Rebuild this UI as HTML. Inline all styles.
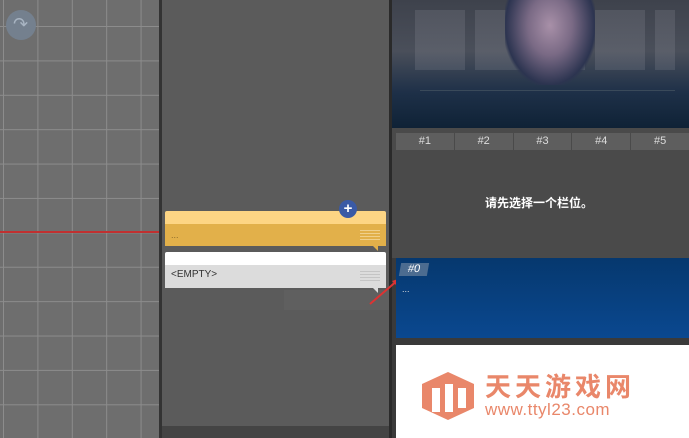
<!DOCTYPE html>
<html><head><meta charset="utf-8"><style>
body{margin:0;width:689px;height:438px;overflow:hidden;position:relative;background:#3a3a3a;font-family:"Liberation Sans","Noto Sans CJK SC",sans-serif}
.a{position:absolute}
</style></head><body>
<div class="a" style="left:0;top:0;width:159px;height:438px;background:#6e6e6e;
background-image:linear-gradient(#8c8c8c 1px,transparent 1px),linear-gradient(90deg,#8c8c8c 1px,transparent 1px);background-size:34.4px 34.4px;background-position:3px 26px"></div>
<div class="a" style="left:0;top:231px;width:160px;height:2px;background:#c03030"></div>
<div class="a" style="left:6px;top:10px;width:30px;height:30px;border-radius:50%;background:#74808e"></div>
<div class="a" style="left:13px;top:14px;color:#a8b4c2;font-size:18px">↷</div>
<div class="a" style="left:159px;top:0;width:3px;height:438px;background:#333"></div>
<div class="a" style="left:162px;top:0;width:227px;height:426px;background:#5b5b5b"></div>
<div class="a" style="left:162px;top:426px;width:227px;height:12px;background:#444"></div>
<div class="a" style="left:389px;top:0;width:3px;height:438px;background:#2a2a2a"></div>
<div class="a" style="left:284px;top:290px;width:105px;height:20px;background:#666;opacity:.35"></div>
<div class="a" style="left:165px;top:211px;width:221px;height:13px;background:#fdd584;border-radius:2px 2px 0 0"></div>
<div class="a" style="left:165px;top:224px;width:221px;height:22px;background:#e2b04a"></div>
<div class="a" style="left:171px;top:230px;color:#8a6a2a;font-size:9px">...</div>
<div class="a" style="left:360px;top:230px;width:20px;height:10px;background:repeating-linear-gradient(#f0d08c 0 1px,transparent 1px 3px)"></div>
<div class="a" style="left:373px;top:246px;width:0;height:0;border-left:5px solid transparent;border-top:5px solid #e2b04a"></div>
<div class="a" style="left:339px;top:200px;width:18px;height:18px;border-radius:50%;background:#3a5aa5;color:#fff;font-size:15px;line-height:18px;text-align:center;font-weight:bold">+</div>
<div class="a" style="left:165px;top:252px;width:221px;height:13px;background:#fff;border-radius:2px 2px 0 0"></div>
<div class="a" style="left:165px;top:265px;width:221px;height:23px;background:#dcdcdc"></div>
<div class="a" style="left:171px;top:269px;color:#333;font-size:10px">&lt;EMPTY&gt;</div>
<div class="a" style="left:360px;top:271px;width:20px;height:10px;background:repeating-linear-gradient(#c4c4c4 0 1px,transparent 1px 3px)"></div>
<div class="a" style="left:373px;top:288px;width:0;height:0;border-left:5px solid transparent;border-top:5px solid #dcdcdc"></div>
<svg class="a" style="left:368px;top:276px" width="35" height="30"><line x1="2" y1="28" x2="30" y2="4" stroke="#d33" stroke-width="2"/><polygon points="33,2 24,5 29,10" fill="#d33"/></svg>
<div class="a" style="left:392px;top:0;width:297px;height:128px;background:linear-gradient(#3e424c 0,#4a4f5a 40%,#1e3048 72%,#0f2236 100%)"></div>
<div class="a" style="left:405px;top:10px;width:270px;height:60px;background:repeating-linear-gradient(90deg,transparent 0 10px,rgba(180,180,190,.3) 10px 60px);opacity:.5"></div>
<div class="a" style="left:505px;top:0;width:90px;height:85px;background:radial-gradient(ellipse at 50% 30%,#a890a8 0,#7a6a85 35%,#2c3450 70%,transparent 75%)"></div>
<div class="a" style="left:420px;top:90px;width:255px;height:1px;background:#3a4a5a"></div>
<div class="a" style="left:392px;top:128px;width:297px;height:130px;background:#4a4a4a"></div>
<div class="a" style="left:396px;top:133px;width:293px;height:17px;display:flex;gap:1px">
<div style="flex:1;background:#5e5e5e;color:#ddd;font-size:11px;text-align:center;line-height:17px">#1</div>
<div style="flex:1;background:#5e5e5e;color:#ddd;font-size:11px;text-align:center;line-height:17px">#2</div>
<div style="flex:1;background:#5e5e5e;color:#ddd;font-size:11px;text-align:center;line-height:17px">#3</div>
<div style="flex:1;background:#5e5e5e;color:#ddd;font-size:11px;text-align:center;line-height:17px">#4</div>
<div style="flex:1;background:#5e5e5e;color:#ddd;font-size:11px;text-align:center;line-height:17px">#5</div></div>
<div class="a" style="left:485px;top:194px;color:#fff;font-size:12px;font-weight:bold">请先选择一个栏位。</div>
<div class="a" style="left:396px;top:258px;width:293px;height:80px;background:linear-gradient(#06386e,#0a4890)"></div>
<div class="a" style="left:400px;top:263px;width:28px;height:13px;background:#4c6c90;color:#fff;font-size:11px;line-height:13px;text-align:center;transform:skewX(-10deg)">#0</div>
<div class="a" style="left:402px;top:284px;color:#ddd;font-size:9px">...</div>
<div class="a" style="left:392px;top:338px;width:297px;height:7px;background:#3a3a3a"></div>
<div class="a" style="left:396px;top:345px;width:293px;height:93px;background:#fff"></div>
<svg class="a" style="left:418px;top:370px" width="60" height="52"><polygon points="30,2 56,14 56,38 30,50 4,38 4,14" fill="#e9876a"/><rect x="14" y="18" width="8" height="24" fill="#fff"/><rect x="27" y="14" width="8" height="28" fill="#fff"/><rect x="40" y="18" width="8" height="20" fill="#fff"/></svg>
<div class="a" style="left:485px;top:374px;color:#e9876a;font-size:26px;line-height:26px;font-weight:bold;letter-spacing:4px;white-space:nowrap">天天游戏网</div>
<div class="a" style="left:485px;top:401px;color:#e9876a;font-size:17px;line-height:17px;letter-spacing:.5px">www.ttyl23.com</div>
</body></html>
